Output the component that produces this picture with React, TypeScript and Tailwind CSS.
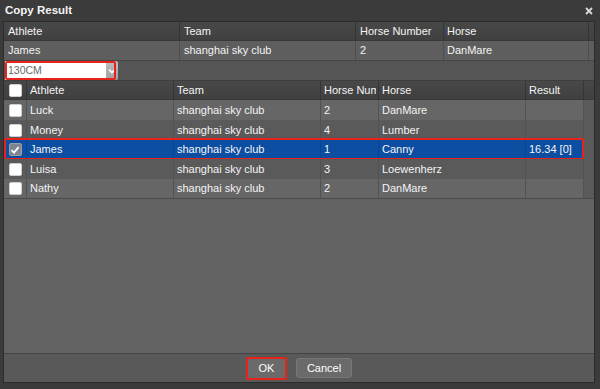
import React from 'react';

const rows = [
  { athlete: 'Luck', team: 'shanghai sky club', num: '2', horse: 'DanMare', result: '' },
  { athlete: 'Money', team: 'shanghai sky club', num: '4', horse: 'Lumber', result: '' },
  { athlete: 'James', team: 'shanghai sky club', num: '1', horse: 'Canny', result: '16.34 [0]', selected: true },
  { athlete: 'Luisa', team: 'shanghai sky club', num: '3', horse: 'Loewenherz', result: '' },
  { athlete: 'Nathy', team: 'shanghai sky club', num: '2', horse: 'DanMare', result: '' },
];

function Box({ checked }: { checked?: boolean }) {
  if (checked) {
    return (
      <span className="w-[13px] h-[13px] rounded-[2px] bg-[#7e8591] border border-[#9aa0a8] flex items-center justify-center">
        <svg width="10" height="10" viewBox="0 0 10 10">
          <path d="M1.5 5.2 L4 7.6 L8.6 2.2" fill="none" stroke="#fff" strokeWidth="1.8" />
        </svg>
      </span>
    );
  }
  return <span className="w-[13px] h-[13px] rounded-[2px] bg-white border border-[#cfcfcf]" />;
}

const cols = 'grid grid-cols-[23px_147px_147px_58px_147px_58px_10px]';

export default function App() {
  return (
    <div className="w-[600px] h-[389px] bg-[#3b3b3b] flex flex-col text-[11px] text-[#f4f4f4] font-['Liberation_Sans',Arial,sans-serif]">
      {/* title bar */}
      <div className="h-[21px] flex items-center justify-between pl-[5px] pr-[7px]">
        <span className="font-bold text-[11.5px] text-[#f4f4f4]">Copy Result</span>
        <svg width="8" height="8" viewBox="0 0 8 8">
          <path d="M1 1 L7 7 M7 1 L1 7" stroke="#d8d8d8" strokeWidth="1.8" />
        </svg>
      </div>

      <div className="ml-[3px] w-[592px] h-[362px] border border-[#2c2c2c] bg-[#636363] flex flex-col">
        {/* top table */}
        <div className="grid grid-cols-[176px_176px_88px_145px_5px] h-[19px] bg-gradient-to-b from-[#484848] to-[#404040] border-b border-[#383838]">
          <div className="pl-[4px] flex items-center border-r border-[#353535]">Athlete</div>
          <div className="pl-[4px] flex items-center border-r border-[#353535]">Team</div>
          <div className="pl-[4px] flex items-center border-r border-[#353535]">Horse Number</div>
          <div className="pl-[3px] flex items-center border-r border-[#353535]">Horse</div>
          <div />
        </div>
        <div className="grid grid-cols-[176px_176px_88px_145px_5px] h-[20px] bg-[#5e5e5e] border-b border-[#454545]">
          <div className="pl-[4px] flex items-center border-r border-[#4e4e4e]">James</div>
          <div className="pl-[4px] flex items-center border-r border-[#4e4e4e]">shanghai sky club</div>
          <div className="pl-[4px] flex items-center border-r border-[#4e4e4e]">2</div>
          <div className="pl-[3px] flex items-center border-r border-[#4e4e4e]">DanMare</div>
          <div />
        </div>

        {/* select row */}
        <div className="h-[20px] bg-[#555555] border-b border-[#3e3e3e] flex items-center pl-[1px]">
          <div className="relative w-[113px] h-[19px] flex">
            <div className="flex-1 bg-white flex items-center pl-[3px] text-[#6b6b6b] text-[10.5px]">130CM</div>
            <div className="w-[12px] bg-gradient-to-b from-[#bdbdbd] to-[#a2a2a2] flex items-center justify-center rounded-r-[2px]">
              <svg width="8" height="6" viewBox="0 0 8 6">
                <path d="M1 1.5 L4 4.5 L7 1.5" fill="none" stroke="#fff" strokeWidth="1.6" />
              </svg>
            </div>
            <span className="absolute left-0 top-0 w-[111px] h-[19px] border-2 border-[#e8231b] rounded-[2px]" />
          </div>
        </div>

        {/* bottom table header */}
        <div className={`${cols} h-[19px] bg-gradient-to-b from-[#484848] to-[#404040] border-b border-[#383838]`}>
          <div className="flex items-center justify-center border-r border-[#353535]"><Box /></div>
          <div className="pl-[3px] flex items-center border-r border-[#353535]">Athlete</div>
          <div className="pl-[3px] flex items-center border-r border-[#353535]">Team</div>
          <div className="pl-[3px] flex items-center border-r border-[#353535] overflow-hidden whitespace-nowrap">
            <span className="block w-[52px] overflow-hidden">Horse Number</span>
          </div>
          <div className="pl-[3px] flex items-center border-r border-[#353535]">Horse</div>
          <div className="pl-[3px] flex items-center border-r border-[#353535]">Result</div>
          <div />
        </div>

        {rows.map((r, i) => {
          const bg = r.selected ? 'bg-[#0c4ea2]' : i % 2 === 0 ? 'bg-[#666666]' : 'bg-[#5a5a5a]';
          const line = r.selected ? 'border-[#0a458f]' : 'border-[#525252]';
          const h = i === 2 || i === 4 ? 'h-[19px]' : 'h-[20px]';
          return (
            <div key={i} className={`${cols} ${h} ${bg} relative`}>
              <div className={`flex items-center justify-center border-r ${line}`}><Box checked={r.selected} /></div>
              <div className={`pl-[3px] flex items-center border-r ${line}`}>{r.athlete}</div>
              <div className={`pl-[3px] flex items-center border-r ${line}`}>{r.team}</div>
              <div className={`pl-[3px] flex items-center border-r ${line}`}>{r.num}</div>
              <div className={`pl-[3px] flex items-center border-r ${line}`}>{r.horse}</div>
              <div className={`pl-[3px] flex items-center border-r ${line}`}>{r.result}</div>
              <div className="bg-[#5a5a5a]" />
              {r.selected && (
                <span className="absolute left-0 -top-[2px] w-[580px] h-[22px] border-2 border-[#e8231b] rounded-[2px]" />
              )}
            </div>
          );
        })}
        <div className="h-[1px] bg-[#4a4a4a]" />

        <div className="flex-1" />

        {/* footer */}
        <div className="h-[29px] bg-[#595959] border-t border-[#444444] flex items-center justify-center gap-[9px]">
          <div className="border-2 border-[#e8231b] rounded-[2px]">
            <button className="w-[37px] h-[19px] bg-[#6a6a6a] rounded-[2px] text-[11px] text-white flex items-center justify-center">OK</button>
          </div>
          <button className="w-[56px] h-[20px] bg-[#6a6a6a] border border-[#777777] rounded-[3px] text-[11px] text-white flex items-center justify-center">Cancel</button>
        </div>
      </div>
    </div>
  );
}
